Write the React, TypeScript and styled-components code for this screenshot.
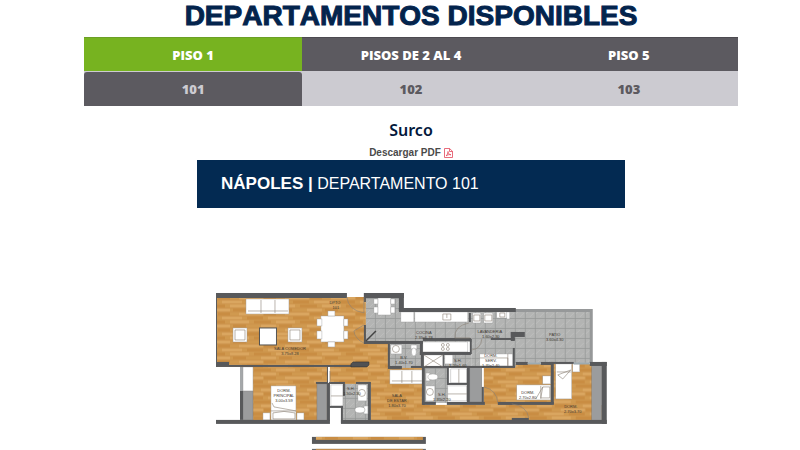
import React from "react";
import styled, { createGlobalStyle } from "styled-components";

const GlobalStyle = createGlobalStyle`
  * { box-sizing: border-box; }
  body { margin: 0; background: #fff; }
  button { border: 0; padding: 0; cursor: pointer; }
`;

const Page = styled.main`
  display: flex;
  flex-direction: column;
  align-items: center;
  padding: 0 0 0 22px;
  font-family: "Liberation Sans", Arial, sans-serif;
`;

const Title = styled.h1`
  margin: 0;
  font: 700 28px/32px "Liberation Sans", Arial, sans-serif;
  font-kerning: none;
  color: #03244d;
  -webkit-text-stroke: 1px #03244d;
  text-align: center;
`;

const Selector = styled.nav`
  width: 84%;
  margin-top: 5px;
`;

const Row = styled.div`
  display: grid;
  grid-template-columns: repeat(3, 1fr);
  background: #cccbd1;
  & + & { padding-top: 1px; }
`;

const FloorTab = styled.button<{ $active?: boolean }>`
  height: 34px;
  font: 800 13px/32px "Open Sans", "Noto Sans", sans-serif;
  color: #fff;
  background: ${(p) => (p.$active ? "#77b320" : "#5c5a60")};
  border-top: 1px solid ${(p) => (p.$active ? "#6c9f26" : "#4c4a50")};
`;

const UnitTab = styled.button<{ $active?: boolean }>`
  height: 34px;
  font: 800 13px/34px "Open Sans", "Noto Sans", sans-serif;
  color: ${(p) => (p.$active ? "#cccbd1" : "#5c5a60")};
  background: ${(p) => (p.$active ? "#5c5a60" : "#cccbd1")};
  border-radius: ${(p) => (p.$active ? "3px 3px 0 0" : "0")};
`;

const District = styled.h2`
  margin: 12px 0 0;
  font: 600 16px/24px "Noto Sans", sans-serif;
  color: #03183c;
`;

const Download = styled.a`
  display: flex;
  align-items: center;
  gap: 3px;
  margin-top: 4px;
  font-size: 10px;
  font-weight: 700;
  line-height: 14px;
  color: #4a4a4a;
  text-decoration: none;
`;

const Banner = styled.h3`
  width: 55%;
  margin: 0;
  padding: 0 24px;
  font-size: 16px;
  font-weight: 400;
  line-height: 48px;
  color: #fff;
  background: #032a52;
  white-space: nowrap;
`;

const ProjectName = styled.strong`
  font-size: 17px;
  font-weight: 700;
`;

const Plan = styled.svg`
  display: block;
  width: 51%;
  margin-top: 82px;
`;

const PdfIcon = () => (
  <svg width="9" height="10" viewBox="0 0 9 10" fill="none" stroke="#e2485c" aria-hidden="true">
    <path d="M.5.5h5L8.500 3.300V9.500H.5zM5.500.5v3h3M2 8c1-.6 2-3 2-4.500C4.200 5.500 5 6.500 7 6.800 5 6.300 3 7 2 8" strokeWidth=".8" />
  </svg>
);

type Rect = [number, number, number, number];

const wood: Rect[] = [
  [217, 297, 149, 69], [217, 343, 172, 24], [253, 367, 75, 54], [330, 366, 94, 18],
  [371, 368, 52, 53], [371, 405, 231, 16], [484, 364, 68, 41], [553, 364, 40, 57],
];
const tiles: Rect[] = [
  [366, 297, 34, 46], [399, 312, 117, 30], [388, 344, 34, 24], [343, 384, 26, 37],
  [425, 353, 23, 50], [446, 353, 26, 14], [472, 341, 44, 26], [515, 311, 76, 52],
];
const whites: Rect[] = [
  [243, 367, 10, 24], [331, 385, 12, 21], [391, 345, 11, 9], [358, 385, 9, 16],
  [401, 312, 13, 10], [415, 312, 53, 10], [423, 342, 45, 10], [424, 355, 19, 12],
  [445, 355, 8, 9], [473, 313, 8, 10], [484, 313, 9, 10], [497, 312, 12, 6],
  [507, 312, 3, 7], [480, 354, 33, 12], [451, 369, 16, 14], [448, 386, 19, 15],
  [426, 386, 9, 15], [378, 298, 13, 17], [374, 299, 4, 5], [374, 307, 4, 6],
  [391, 299, 4, 5], [391, 307, 4, 6], [321, 316, 23, 26], [317, 319, 5, 7],
  [317, 331, 5, 8], [344, 319, 4, 7], [344, 331, 4, 8], [328, 311, 7, 5],
  [328, 342, 7, 5], [246, 299, 43, 15], [233, 328, 14, 14], [288, 328, 14, 14],
  [271, 386, 25, 34], [263, 413, 7, 7], [297, 413, 7, 7], [390, 370, 33, 14],
  [517, 385, 34, 15], [543, 376, 8, 8], [556, 364, 16, 35], [573, 364, 7, 8],
];
const closets: Rect[] = [
  [243, 391, 10, 29], [317, 384, 10, 37], [470, 367, 12, 35], [592, 365, 10, 56],
];
const walls: Rect[] = [
  [216, 293, 131, 5], [216, 297, 1, 70], [216, 362, 13, 4], [216, 365, 142, 2],
  [364, 293, 40, 5], [364, 293, 2, 9], [364, 325, 2, 19], [399, 293, 5, 18],
  [399, 308, 117, 4], [364, 341, 59, 3], [423, 338, 48, 3], [420, 341, 3, 14],
  [470, 339, 2, 15], [469, 313, 2, 9], [420, 352, 51, 3], [388, 344, 2, 23],
  [388, 366, 14, 3], [411, 366, 78, 2], [421, 354, 3, 14], [443, 355, 1, 12],
  [491, 338, 24, 2], [511, 332, 14, 5], [511, 332, 4, 9], [513, 348, 2, 20],
  [482, 366, 33, 2], [516, 362, 12, 3], [541, 362, 12, 3], [551, 362, 3, 42],
  [553, 362, 21, 2], [590, 362, 17, 4], [602, 362, 5, 62], [498, 402, 56, 3],
  [447, 402, 38, 3], [482, 387, 2, 17], [467, 366, 3, 38], [447, 366, 2, 19],
  [448, 383, 20, 2], [422, 367, 3, 38], [423, 402, 13, 3], [368, 382, 3, 40],
  [356, 382, 14, 2], [329, 382, 16, 2], [327, 366, 1, 18], [327, 383, 3, 38],
  [343, 384, 2, 12], [329, 406, 14, 2], [341, 406, 2, 17], [316, 382, 12, 2],
  [240, 391, 3, 29], [216, 420, 114, 4], [341, 420, 266, 4], [512, 418, 17, 3],
];

type Note = [number, number, string];
const notes: Note[] = [
  [335, 304, "DPTO"], [336, 309, "101"], [290, 350, "SALA COMEDOR"], [290, 355, "3.75x8.28"],
  [424, 334, "COCINA"], [424, 339, "2.35x6.78"], [490, 333, "LAVANDERIA"], [491, 338, "1.60x2.30"],
  [555, 336, "PATIO"], [555, 341, "3.60x4.30"], [284, 392, "DORM."], [284, 397, "PRINCIPAL"],
  [284, 402, "3.00x3.59"], [397, 397, "SALA"], [397, 402, "DE ESTAR"], [397, 407, "1.80x3.70"],
  [404, 359, "B.V."], [404, 364, "1.40x1.70"], [351, 390, "S.H."], [352, 395, "1.50x2.30"],
  [458, 362, "S.H."], [458, 367, "1.20x1.60"], [491, 357, "DORM."], [491, 362, "SERV."],
  [491, 367, "1.70x2.40"], [442, 396, "S.H."], [442, 401, "1.40x2.20"], [528, 394, "DORM."],
  [528, 399, "2.70x2.80"], [571, 408, "DORM."], [573, 413, "2.70x3.70"],
];

const Blocks = ({ items, fill, stroke }: { items: Rect[]; fill: string; stroke?: string }) => (
  <g fill={fill} stroke={stroke} strokeWidth=".4">
    {items.map(([x, y, w, h], i) => <rect key={i} x={x} y={y} width={w} height={h} />)}
  </g>
);

const FloorPlan = () => (
  <Plan viewBox="213 290 397 160" role="img" aria-label="Plano del departamento 101">
    <defs>
      <pattern id="wood" width="46" height="16" patternUnits="userSpaceOnUse">
        <rect width="46" height="16" fill="#d0994f" />
        <path d="M0 2h19M31 6h15M9 10h24M0 14h12M38 14h8" stroke="#daa660" strokeWidth="3" />
        <path d="M24 2h17M3 6h13M34 10h12M17 14h16" stroke="#c98d43" strokeWidth="3" />
        <path d="M0 4h46M0 8h46M0 12h46M0 16h46" stroke="#c1873f" strokeWidth=".3" />
      </pattern>
      <pattern id="tile" x="365" y="298" width="10" height="10" patternUnits="userSpaceOnUse">
        <rect width="10" height="10" fill="#b3b4b3" />
        <path d="M1 6L5 2M5 9l4-4" stroke="#bdbebd" strokeWidth="1" />
        <path d="M0 .5h10M.5 0v10" stroke="#949695" strokeWidth=".7" />
      </pattern>
    </defs>
    <Blocks items={wood} fill="url(#wood)" />
    <Blocks items={tiles} fill="url(#tile)" />
    <path d="M515 310.500h76.500V363" fill="none" stroke="#969899" strokeWidth="3" />
    <path d="M241.500 367v24" stroke="#a5a8aa" strokeWidth="3" />
    <Blocks items={closets} fill="#9b9c9d" stroke="#777" />
    <Blocks items={whites} fill="#fff" stroke="#999" />
    <rect x="331" y="408" width="10" height="16" fill="#fff" />
    <rect x="259.500" y="328" width="17" height="17" fill="#fff" stroke="#535353" />
    <Blocks items={walls} fill="#58595b" />
    <path d="M353 362h16v3l-2 2h-16v-3z" fill="#505153" stroke="#333" strokeWidth=".6" />
    <path d="M366 341l10-10" stroke="#444" strokeWidth="1.500" />
    <g fill="none" stroke="#8b8175" strokeWidth=".6">
      <path d="M347 297q1 13 17 16V297M364 343q-9-4-10-12l10-6M455 338q-1-12 14-15M455 338h15M472 350q9-1 10-11M484 387q13 3 14 16M512 404q15 2 17 14M330 371v12" />
      <path d="M261 300v13M275 300v13M248 311h40M235 330h10v10h-10zM290 330h10v10h-10zM402 371v12M412 371v12M392 381h30M271 411h25M272 403l2 4 22 4M273 413q11-3 22 0v6h-22zM541 386v13M536 399l7-12M543 387h7v11h-9zM557 372h14M558 375l13-5-8 9-5-4M459 369v14M448 394h19M331 396h12M424 355l19 12M443 355l-19 12M480 358h28v8M508 354v12" />
      <circle cx="396" cy="349" r="3.500" /><circle cx="362" cy="393" r="3.500" /><circle cx="430" cy="392" r="3.500" />
      <path d="M443 314h8v6h-8zM447 314v4M474 315h6v6h-6zM485 315h7v6h-7zM500 313h5v4h-5z" />
      <circle cx="443" cy="345" r="1.500" /><circle cx="448" cy="345" r="1.500" /><circle cx="443" cy="349" r="1.500" /><circle cx="448" cy="349" r="1.500" />
    </g>
    <g fill="#fff" stroke="#999" strokeWidth=".5">
      <path d="M411 345h6v4h-6z" /><ellipse cx="414" cy="352" rx="2.500" ry="4" />
      <path d="M364 406h4v8h-4z" /><ellipse cx="360" cy="410" rx="5" ry="3" />
      <path d="M426 373h4v8h-4z" /><ellipse cx="433" cy="377" rx="5" ry="3" />
    </g>
    <path d="M528 363.500h13M574 363.500h16" stroke="#9daab0" strokeWidth="2" />
    <g fill="#3f3932" fontFamily="Liberation Sans, sans-serif" fontSize="4" textAnchor="middle">
      {notes.map(([x, y, text]) => <text key={`${x}-${y}`} x={x} y={y}>{text}</text>)}
    </g>
    <rect x="312" y="437" width="114" height="7" fill="#58595b" />
    <rect x="316" y="437" width="107" height="3" fill="url(#wood)" />
    <rect x="312" y="449" width="114" height="1" fill="#58595b" />
    <rect x="316" y="449" width="107" height="1" fill="#cc9049" />
  </Plan>
);

const floors = ["PISO 1", "PISOS DE 2 AL 4", "PISO 5"];
const units = ["101", "102", "103"];

export default function App() {
  return (
    <>
      <GlobalStyle />
      <Page>
        <Title>DEPARTAMENTOS DISPONIBLES</Title>
        <Selector aria-label="Pisos y departamentos">
          <Row>
            {floors.map((f, i) => <FloorTab key={f} type="button" $active={i === 0} aria-pressed={i === 0}>{f}</FloorTab>)}
          </Row>
          <Row>
            {units.map((u, i) => <UnitTab key={u} type="button" $active={i === 0} aria-pressed={i === 0}>{u}</UnitTab>)}
          </Row>
        </Selector>
        <District>Surco</District>
        <Download href="#pdf">Descargar PDF <PdfIcon /></Download>
        <Banner><ProjectName>NÁPOLES |</ProjectName> DEPARTAMENTO 101</Banner>
        <FloorPlan />
      </Page>
    </>
  );
}
